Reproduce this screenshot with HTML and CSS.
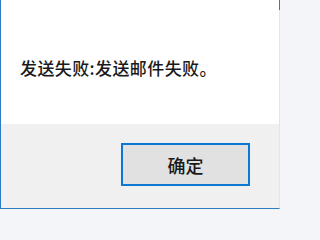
FILE: index.html
```html
<!DOCTYPE html>
<html lang="zh-CN">
<head>
<meta charset="utf-8">
<link rel="stylesheet" href="styles.css">
</head>
<body>
<div class="window">
  <div class="content">
    <p class="message">发送失败:发送邮件失败。</p>
  </div>
  <div class="footer">
    <button class="ok">确定</button>
  </div>
</div>
</body>
</html>
```
FILE: styles.css
```css
html, body {
  margin: 0;
  padding: 0;
}
body {
  background: #f3f5f8;
  width: 283px;
  height: 211px;
  overflow: hidden;
  font-family: "Noto Sans CJK SC", "Microsoft YaHei", sans-serif;
}
.window {
  position: relative;
  width: 278px;
  height: 208px;
  border-left: 1px solid #2a7cc4;
  border-bottom: 1px solid #2a7cc4;
  border-right: 1px solid #e4e4e4;
  display: flex;
  flex-direction: column;
}
.window::after {
  content: "";
  position: absolute;
  right: -1px;
  top: 0;
  width: 1px;
  height: 10px;
  background: #2a7cc4;
}
.content {
  height: 124px;
  background: #ffffff;
  box-sizing: border-box;
  padding: 57px 0 0 19px;
}
.message {
  margin: 0;
  font-size: 17px;
  font-weight: 500;
  line-height: 22px;
  color: #1a1a1a;
  white-space: nowrap;
  letter-spacing: 0.4px;
}
.footer {
  flex: 1;
  background: #f0f0f0;
  display: flex;
  justify-content: flex-end;
  align-items: flex-start;
  padding: 19px 29px 0 0;
}
.ok {
  width: 129px;
  height: 43px;
  box-sizing: border-box;
  border: 2px solid #0c78d4;
  background: #e1e1e1;
  font-family: "Noto Sans CJK SC", "Microsoft YaHei", sans-serif;
  font-size: 18px;
  font-weight: 500;
  color: #1a1a1a;
  padding: 0;
  margin: 0;
}
```
